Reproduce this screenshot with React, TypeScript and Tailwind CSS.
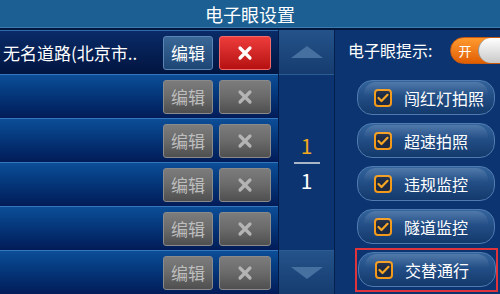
import React from "react";

const rows = ["无名道路(北京市..", "", "", "", "", ""];
const options = ["闯红灯拍照", "超速拍照", "违规监控", "隧道监控", "交替通行"];

const XIcon = ({ color }: { color: string }) => (
    <svg width="16" height="16" viewBox="0 0 16 16">
        <path d="M3 3 L13 13 M13 3 L3 13" stroke={color} strokeWidth="3.2" strokeLinecap="round" />
    </svg>
);

const Check = () => (
    <div className="w-[18px] h-[18px] rounded-[4px] border-2 border-[#f39a1a] bg-[#1d2a44] flex items-center justify-center">
        <svg width="12" height="10" viewBox="0 0 12 10">
            <path d="M1.5 5 L4.5 8 L10.5 1.8" stroke="#f5a623" strokeWidth="2.2" fill="none" strokeLinecap="round" strokeLinejoin="round" />
        </svg>
    </div>
);

const Option = ({ label }: { label: string }) => (
    <div className="relative w-[138px] h-[35px] rounded-[15px] border border-[#4f7bb0] bg-gradient-to-b from-[#34649d] via-[#214c84] to-[#143a6c] flex items-center pl-[16px] overflow-hidden">
        {/* gloss */}
        <div className="absolute left-[6px] right-[6px] top-[1px] h-[14px] rounded-t-[12px] bg-gradient-to-b from-[#ffffff26] to-transparent" />
        <Check />
        <span className="ml-[12px] text-[16px] leading-none whitespace-nowrap">{label}</span>
    </div>
);

export default function App() {
    return (
        <div
            className="w-[500px] h-[294px] overflow-hidden flex flex-col bg-[#0b3470] text-white"
            style={{ fontFamily: '"Noto Sans CJK SC", "Noto Sans", sans-serif' }}
        >
            {/* Title */}
            <div className="h-[28px] bg-[#1b5f93] border-b border-[#3a7cb0] flex items-center justify-center text-[18px] leading-none">
                电子眼设置
            </div>
            <div className="h-[2px] bg-[#03163c]" />

            <div className="flex flex-1">
                {/* List */}
                <div className="w-[278px] flex flex-col">
                    {rows.map((name, i) => {
                        const active = i === 0;
                        return (
                            <div
                                key={i}
                                className={
                                    active
                                        ? "h-[44px] border-t border-[#2e69ad] bg-gradient-to-b from-[#0a2b68] to-[#021540] flex items-center"
                                        : "h-[44px] border-t border-[#3676bd] bg-gradient-to-b from-[#0c4e98] to-[#021c58] flex items-center"
                                }
                            >
                                <div className="flex-1 pl-[3px] text-[17px] leading-none whitespace-nowrap">{name}</div>
                                {active ? (
                                    <div className="w-[50px] h-[34px] rounded-[3px] border border-[#5a86b6] bg-gradient-to-b from-[#3b6898] to-[#1d4675] flex items-center justify-center text-[17px] leading-none">
                                        编辑
                                    </div>
                                ) : (
                                    <div className="w-[50px] h-[34px] rounded-[3px] border border-[#8a8a8a] bg-gradient-to-b from-[#7c7c7c] via-[#6a6a6a] to-[#4f4f4f] flex items-center justify-center text-[17px] leading-none text-[#bdbdbd]">
                                        编辑
                                    </div>
                                )}
                                {active ? (
                                    <div className="ml-[6px] mr-[7px] w-[52px] h-[34px] rounded-[3px] border border-[#f26a6a] bg-gradient-to-b from-[#ee3b3b] to-[#b50f0f] flex items-center justify-center">
                                        <XIcon color="#ffffff" />
                                    </div>
                                ) : (
                                    <div className="ml-[6px] mr-[7px] w-[52px] h-[34px] rounded-[3px] border border-[#8a8a8a] bg-gradient-to-b from-[#7c7c7c] via-[#6a6a6a] to-[#4f4f4f] flex items-center justify-center">
                                        <XIcon color="#b4b4b4" />
                                    </div>
                                )}
                            </div>
                        );
                    })}
                </div>

                {/* Pager */}
                <div className="w-[57px] flex flex-col border-l border-[#021a48] border-r border-r-[#06204e] bg-[#0b3470]">
                    <div className="h-[45px] bg-gradient-to-b from-[#24538a] to-[#163c70] border-b border-[#2c5c94] flex items-center justify-center">
                        <div className="w-0 h-0 border-l-[16px] border-r-[16px] border-b-[12px] border-l-transparent border-r-transparent border-b-[#45709f]" />
                    </div>
                    <div className="flex-1 flex flex-col items-center justify-center">
                        <div className="text-[21px] leading-none text-[#f2aa1c]">1</div>
                        <div className="w-[26px] h-[2px] bg-[#a8b6c8] my-[6px]" />
                        <div className="text-[21px] leading-none">1</div>
                    </div>
                    <div className="h-[44px] bg-gradient-to-b from-[#24538a] to-[#163c70] border-t border-[#2c5c94] flex items-center justify-center">
                        <div className="w-0 h-0 border-l-[16px] border-r-[16px] border-t-[12px] border-l-transparent border-r-transparent border-t-[#45709f]" />
                    </div>
                </div>

                {/* Settings */}
                <div className="flex-1 flex flex-col overflow-hidden">
                    <div className="h-[40px] flex items-center pl-[13px] whitespace-nowrap">
                        <span className="text-[16px] leading-none">电子眼提示:</span>
                        <div className="ml-[18px] flex items-center h-[27px] w-[64px] shrink-0 rounded-l-full bg-gradient-to-b from-[#ff9a2e] to-[#e05e00] border border-[#c85a10]">
                            <span className="pl-[7px] text-[13px] leading-none">开</span>
                            <div className="ml-[7px] h-[25px] flex-1 rounded-l-full bg-gradient-to-b from-[#ffffff] to-[#c9c9c9] border-l border-[#9a9a9a]" />
                        </div>
                    </div>
                    <div className="flex flex-col gap-[8px] pl-[22px] mt-[10px]">
                        {options.slice(0, 4).map((opt) => (
                            <Option key={opt} label={opt} />
                        ))}
                        <div className="-mt-[4px] -ml-[2px] w-[143px] border-2 border-[#e0343c] pl-[1px] pt-[2px] pb-[3px]">
                            <Option label={options[4]} />
                        </div>
                    </div>
                </div>
            </div>
        </div>
    );
}
